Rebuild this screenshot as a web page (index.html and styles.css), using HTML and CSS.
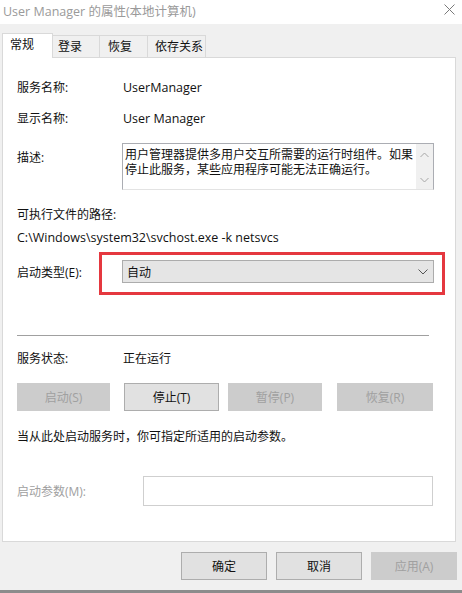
FILE: index.html
```html
<!DOCTYPE html>
<html lang="zh-CN">
<head>
<meta charset="utf-8">
<title>User Manager 的属性(本地计算机)</title>
<link rel="stylesheet" href="styles.css">
</head>
<body>
<div class="titlebar">
  <span class="title">User Manager 的属性(本地计算机)</span>
  <svg class="close" width="11" height="11" viewBox="0 0 11 11"><path d="M0.5 0.5 L10.5 10.5 M10.5 0.5 L0.5 10.5" stroke="#7a7a7a" stroke-width="1" fill="none"/></svg>
</div>
<div class="dialog">
  <div class="tabs">
    <div class="tab active">常规</div>
    <div class="tab t2">登录</div>
    <div class="tab t3">恢复</div>
    <div class="tab t4">依存关系</div>
  </div>
  <div class="panel">
    <div class="row r-name"><span class="lbl">服务名称:</span><span class="val latin">UserManager</span></div>
    <div class="row r-disp"><span class="lbl">显示名称:</span><span class="val latin">User Manager</span></div>
    <div class="row r-desc">
      <span class="lbl lbl-desc">描述:</span>
      <div class="descbox">
        <div class="desctext">用户管理器提供多用户交互所需要的运行时组件。如果停止此服务，某些应用程序可能无法正确运行。</div>
        <div class="scrollbar">
          <svg width="9" height="6" viewBox="0 0 9 6"><path d="M0.5 5 L4.5 1 L8.5 5" stroke="#a6a6a6" fill="none"/></svg>
          <svg width="9" height="6" viewBox="0 0 9 6"><path d="M0.5 1 L4.5 5 L8.5 1" stroke="#a6a6a6" fill="none"/></svg>
        </div>
      </div>
    </div>
    <div class="row r-pathlbl"><span>可执行文件的路径:</span></div>
    <div class="row r-path"><span class="latin">C:\Windows\system32\svchost.exe -k netsvcs</span></div>
    <div class="row r-type">
      <span class="lbl">启动类型(E):</span>
      <div class="select">
        <span>自动</span>
        <svg width="10" height="6" viewBox="0 0 10 6"><path d="M0.5 0.5 L5 5 L9.5 0.5" stroke="#555" fill="none"/></svg>
      </div>
      <div class="highlight"></div>
    </div>
    <div class="sep"></div>
    <div class="row r-status"><span class="lbl">服务状态:</span><span class="val">正在运行</span></div>
    <div class="btnrow">
      <div class="btn dis b1">启动(S)</div>
      <div class="btn b2">停止(T)</div>
      <div class="btn dis b3">暂停(P)</div>
      <div class="btn dis b4">恢复(R)</div>
    </div>
    <div class="row r-hint"><span>当从此处启动服务时，你可指定所适用的启动参数。</span></div>
    <div class="row r-param">
      <span class="lbl lbl-param">启动参数(M):</span>
      <div class="input"></div>
    </div>
  </div>
  <div class="footer">
    <div class="btn fbtn">确定</div>
    <div class="btn fbtn">取消</div>
    <div class="btn fbtn dis">应用(A)</div>
  </div>
</div>
<div class="bottomline"></div>
</body>
</html>
```
FILE: styles.css
```css
* { box-sizing: border-box; }
html, body { margin: 0; padding: 0; }
body {
  width: 462px;
  height: 593px;
  overflow: hidden;
  background: #ffffff;
  font-family: "Open Sans", "Noto Sans CJK SC", sans-serif;
  font-size: 12px;
  color: #111;
}
.latin { font-size: 12.5px; }
.titlebar {
  height: 24px;
  background: #fff;
  display: flex;
  align-items: center;
  justify-content: space-between;
  padding: 0 7px 3px 3px;
}
.title {
  font-size: 12.5px;
  color: #9a9a9a;
}
.close { display: block; margin-top: -2px; }
.dialog {
  height: 566px;
  background: #f0f0f0;
  padding-top: 9px;
}
.tabs {
  display: flex;
  align-items: flex-end;
  padding-left: 2px;
  height: 24px;
  position: relative;
  z-index: 2;
}
.tab {
  height: 22px;
  border: 1px solid #d9d9d9;
  border-bottom: none;
  background: #f0f0f0;
  line-height: 21px;
  padding-left: 6px;
  margin-left: -1px;
}
.tab.active {
  height: 25px;
  width: 51px;
  background: #fff;
  margin-left: 0;
  padding-left: 7px;
  line-height: 22px;
  margin-bottom: -1px;
  z-index: 3;
  position: relative;
}
.tab.t2 { width: 47px; border-left: none; margin-left: 0; padding-left: 5px; }
.tab.t3 { width: 49px; padding-left: 8px; }
.tab.t4 { width: 59px; padding-left: 7px; }
.panel {
  margin-left: 2px;
  width: 454px;
  height: 485px;
  background: #fff;
  border: 1px solid #d9d9d9;
  padding: 19px 21px 0 14px;
  position: relative;
  z-index: 1;
}
.row {
  display: flex;
  align-items: center;
  height: 20px;
  position: relative;
}
.lbl { width: 106px; flex: none; }
.r-disp { margin-top: 11px; }
.r-desc { margin-top: 15px; height: 47px; align-items: flex-start; }
.lbl-desc { padding-top: 5px; }
.descbox {
  width: 312px;
  height: 47px;
  margin-left: -1px;
  border: 1px solid #abadb3;
  border-bottom-color: #e3e3e3;
  display: flex;
}
.desctext {
  flex: 1;
  padding: 2px 0 0 2px;
  line-height: 15px;
  font-family: "Noto Sans CJK SC", sans-serif;
}
.scrollbar {
  width: 17px;
  background: #f0f0f0;
  display: flex;
  flex-direction: column;
  justify-content: space-between;
  align-items: center;
  padding: 8px 0 6px;
}
.scrollbar svg { display: block; }
.r-pathlbl { margin-top: 14px; }
.r-path { margin-top: 3px; }
.r-type { margin-top: 13px; height: 23px; }
.select {
  width: 312px;
  height: 23px;
  margin-left: -1px;
  background: #e5e5e5;
  border: 1px solid #acacac;
  display: flex;
  align-items: center;
  justify-content: space-between;
  padding: 0 5px 0 4px;
}
.select svg { display: block; }
.highlight {
  position: absolute;
  left: 82px;
  top: -8px;
  width: 346px;
  height: 43px;
  border: 3px solid #e5383f;
}
.sep {
  margin-top: 52px;
  width: 412px;
  height: 1px;
  background: #a0a0a0;
}
.r-status { margin-top: 12px; }
.btnrow {
  display: flex;
  margin-top: 15px;
  height: 28px;
}
.btn {
  height: 28px;
  display: flex;
  align-items: center;
  justify-content: center;
  background: #e1e1e1;
  border: 1px solid #adadad;
}
.btn.dis {
  background: #cccccc;
  border-color: #cccccc;
  color: #a0a0a0;
}
.b1 { width: 93px; }
.b2 { width: 95px; margin-left: 14px; }
.b3 { width: 94px; margin-left: 9px; }
.b4 { width: 96px; margin-left: 15px; }
.r-hint { margin-top: 15px; }
.r-param { margin-top: 30px; height: 30px; }
.lbl-param { width: 126px; color: #a0a0a0; }
.input {
  width: 290px;
  height: 30px;
  border: 1px solid #cfcfcf;
  background: #fff;
}
.footer {
  display: flex;
  justify-content: flex-end;
  gap: 9px;
  margin-top: 10px;
  padding-right: 5px;
}
.fbtn { width: 86px; }
.bottomline {
  height: 3px;
  background: #8c8c8c;
}
```
